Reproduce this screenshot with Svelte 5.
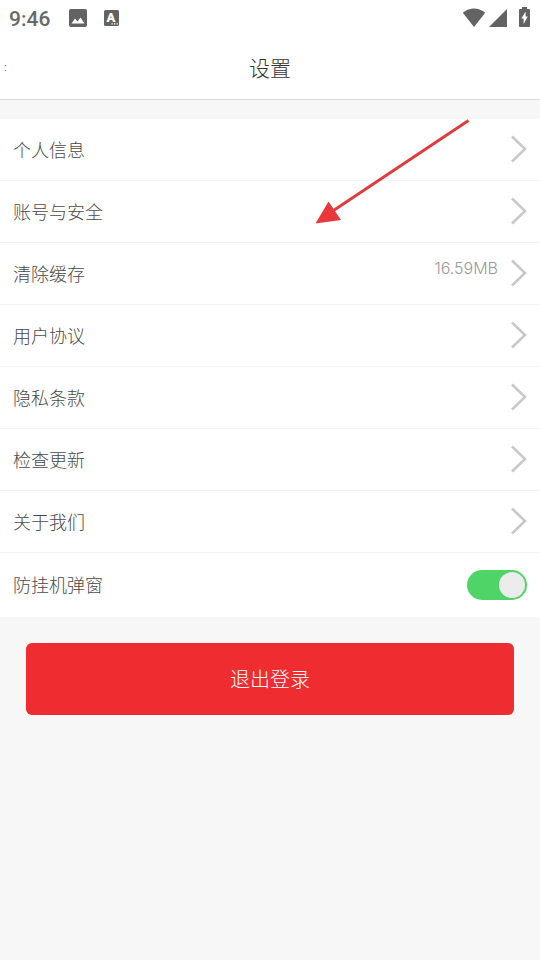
<script>
  let antiIdle = $state(true);

  const items = [
    { name: '个人信息' },
    { name: '账号与安全' },
    { name: '清除缓存', value: '16.59MB' },
    { name: '用户协议' },
    { name: '隐私条款' },
    { name: '检查更新' },
    { name: '关于我们' },
  ];
</script>

<div class="screen">
  <header>
    <div class="status">
      <span class="time">9:46</span>
      <svg class="photo" width="18" height="18" viewBox="0 0 18 18">
        <rect width="18" height="18" rx="2" />
        <path class="cut" d="M2.5 14.5 L6 9.5 L8.5 12.5 L11.5 8.5 L15.500 14.5 Z" />
      </svg>
      <svg class="letter" width="16" height="16" viewBox="0 0 16 16">
        <rect x="1" width="15" height="16" rx="1.5" />
        <text class="cut" x="8" y="12" text-anchor="middle">A</text>
        <path class="cut" d="M8.500 13.2h1.3v1.3h-1.3z M11 13.2h1.3v1.3h-1.3z M13.500 13.2h1.3v1.3h-1.3z" />
      </svg>
      <span class="spacer"></span>
      <svg class="wifi" width="24" height="20" viewBox="0 0 24 20">
        <path d="M12 19 L0.8 4.8 Q12 -3.6 23.2 4.8 Z" />
      </svg>
      <svg class="signal" width="18" height="18" viewBox="0 0 18 18">
        <path d="M0 18 L18 0 V18 Z" />
      </svg>
      <svg class="battery" width="11" height="20" viewBox="0 0 11 20">
        <path d="M3 0 H8 V2 H10 Q11 2 11 3 V19 Q11 20 10 20 H1 Q0 20 0 19 V3 Q0 2 1 2 H3 Z" />
        <path class="cut" d="M6.6 4.5 L2.4 11.5 H4.6 V17 L8.8 9.5 H6.6 Z" />
      </svg>
    </div>
    <nav>
      <button class="back" aria-label="返回">:</button>
      <h1>设置</h1>
    </nav>
  </header>

  <main>
    <div class="list">
      {#each items as item}
        <button class="row">
          <span class="name">{item.name}</span>
          {#if item.value}
            <span class="value">{item.value}</span>
          {/if}
          <svg class="chevron" width="16" height="28" viewBox="0 0 16 28">
            <path d="M1 1.5 L14 14 L1 26.5" />
          </svg>
        </button>
      {/each}
      <label class="row last">
        <span class="name">防挂机弹窗</span>
        <input class="switch" type="checkbox" bind:checked={antiIdle} />
      </label>
    </div>
    <button class="logout">退出登录</button>
  </main>

  <svg class="arrow" width="160" height="110" viewBox="0 0 160 110">
    <path class="shaft" d="M156.500 5.500 L20 96.500" />
    <path class="head" d="M3.500 108.500 L16.500 86.500 L29 105 Z" />
  </svg>
</div>

<style>
  :global(body) {
    background: #f7f7f7;
  }

  .screen {
    position: relative;
    min-height: 100vh;
    background: #f7f7f7;
    color: #4a4a4a;
    font-family: "Noto Sans CJK SC", sans-serif;
    font-weight: 300;
  }

  button {
    border: none;
    margin: 0;
    padding: 0;
    background: none;
    color: inherit;
    font: inherit;
    text-align: left;
  }

  header {
    background: #fff;
    border-bottom: 1px solid #dcdcdc;
  }

  .status {
    display: flex;
    align-items: center;
    height: 36px;
    padding: 0 10px 0 9px;
    fill: #636363;
  }

  .time {
    color: #686868;
    font-family: Roboto, sans-serif;
    font-size: 21px;
    font-weight: 500;
    line-height: 24px;
    padding-top: 2px;
  }

  .photo {
    margin-left: 19px;
  }

  .letter {
    margin-left: 16px;
  }

  .letter text {
    font-family: Roboto, sans-serif;
    font-size: 13px;
    font-weight: 900;
  }

  .cut {
    fill: #fff;
  }

  .spacer {
    flex: 1;
  }

  .signal {
    margin-left: 3px;
  }

  .battery {
    margin-left: 12px;
    margin-bottom: 2px;
  }

  nav {
    display: grid;
    grid-template-columns: 40px 1fr 40px;
    align-items: center;
    height: 63px;
  }

  .back {
    padding-left: 4px;
    font-family: "Liberation Sans", sans-serif;
    font-size: 10px;
    line-height: 40px;
  }

  h1 {
    margin: 0;
    padding-bottom: 2px;
    color: #333;
    font-size: 21px;
    font-weight: 300;
    line-height: 32px;
    text-align: center;
  }

  .list {
    margin-top: 19px;
    background: #fff;
  }

  .row {
    display: flex;
    align-items: center;
    box-sizing: border-box;
    width: 100%;
    height: 62px;
    padding: 0 13px 2px;
    border-bottom: 1px solid #f4f4f4;
    font-size: 18px;
    line-height: 28px;
  }

  .last {
    height: 64px;
    padding-bottom: 0;
    border-bottom: none;
  }

  .name {
    flex: 1;
  }

  .last .name {
    padding-bottom: 2px;
  }

  .value {
    margin-right: 13px;
    padding-bottom: 10px;
    color: #999;
    font-family: Inter, "Liberation Sans", sans-serif;
    font-size: 16px;
    line-height: 20px;
  }

  .chevron {
    fill: none;
    stroke: #c8c8c8;
    stroke-width: 2.5;
  }

  .switch {
    appearance: none;
    display: flex;
    width: 60px;
    height: 30px;
    margin: 0;
    padding: 2px;
    box-sizing: border-box;
    border-radius: 15px;
    background: #ccc;
  }

  .switch::before {
    content: '';
    width: 26px;
    height: 26px;
    border-radius: 50%;
    background: #ececec;
  }

  .switch:checked {
    justify-content: flex-end;
    background: #4fd468;
  }

  .logout {
    display: block;
    width: calc(100% - 52px);
    height: 72px;
    margin: 26px;
    border-radius: 6px;
    background: #ef2d30;
    color: #fff;
    font-size: 20px;
    line-height: 32px;
    text-align: center;
  }

  .arrow {
    position: absolute;
    top: 115px;
    left: 312px;
    pointer-events: none;
  }

  .shaft {
    stroke: #e03c40;
    stroke-width: 3;
  }

  .head {
    fill: #e8383b;
  }
</style>
